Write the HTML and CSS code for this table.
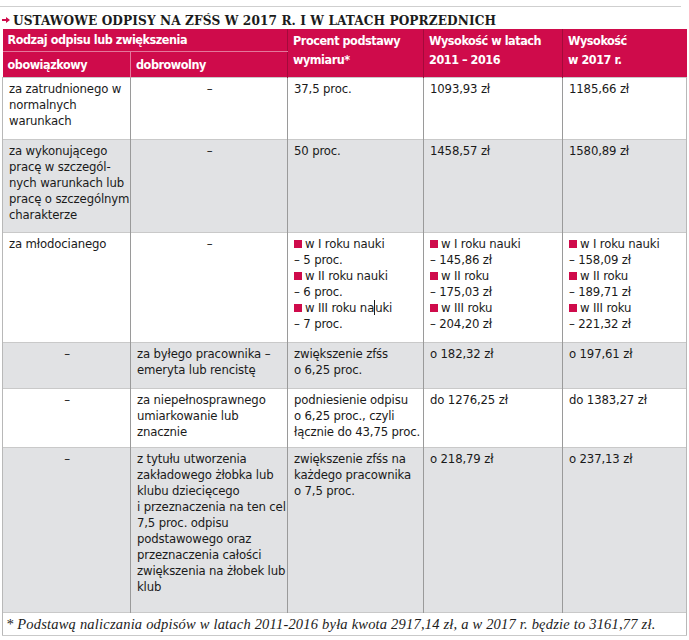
FILE: index.html
```html
<!DOCTYPE html>
<html lang="pl">
<head>
<meta charset="utf-8">
<link rel="stylesheet" href="styles.css">
</head>
<body>
<div class="page">
  <div class="topline"></div>
  <h1 class="title"><svg class="arrow" width="8" height="6" viewBox="0 0 8 6"><path d="M0 2h4V0l4 3-4 3V4H0z" fill="#cf0b4b"/></svg>USTAWOWE ODPISY NA ZFŚS W 2017 R. I W LATACH POPRZEDNICH</h1>
  <table class="tbl">
    <colgroup>
      <col class="c1"><col class="c2"><col class="c3"><col class="c4"><col class="c5">
    </colgroup>
    <thead>
      <tr class="hr1">
        <th colspan="2" class="grp">Rodzaj odpisu lub zwiększenia</th>
        <th rowspan="2" class="hv">Procent podstawy<br>wymiaru*</th>
        <th rowspan="2" class="hv">Wysokość w latach<br>2011 – 2016</th>
        <th rowspan="2" class="hv">Wysokość<br>w 2017 r.</th>
      </tr>
      <tr class="hr2">
        <th class="sub">obowiązkowy</th>
        <th class="sub sub2">dobrowolny</th>
      </tr>
    </thead>
    <tbody>
      <tr class="r1">
        <td>za zatrudnionego w<br>normalnych<br>warunkach</td>
        <td class="dash">–</td>
        <td>37,5 proc.</td>
        <td>1093,93 zł</td>
        <td>1185,66 zł</td>
      </tr>
      <tr class="r2 grey">
        <td>za wykonującego<br>pracę w szczegól-<br>nych warunkach lub<br>pracę o szczególnym<br>charakterze</td>
        <td class="dash">–</td>
        <td>50 proc.</td>
        <td>1458,57 zł</td>
        <td>1580,89 zł</td>
      </tr>
      <tr class="r3">
        <td>za młodocianego</td>
        <td class="dash">–</td>
        <td><span class="sq"></span>w I roku nauki<br>– 5 proc.<br><span class="sq"></span>w II roku nauki<br>– 6 proc.<br><span class="sq"></span>w III roku na<span class="caret"></span>uki<br>– 7 proc.</td>
        <td><span class="sq"></span>w I roku nauki<br>– 145,86 zł<br><span class="sq"></span>w II roku<br>– 175,03 zł<br><span class="sq"></span>w III roku<br>– 204,20 zł</td>
        <td><span class="sq"></span>w I roku nauki<br>– 158,09 zł<br><span class="sq"></span>w II roku<br>– 189,71 zł<br><span class="sq"></span>w III roku<br>– 221,32 zł</td>
      </tr>
      <tr class="r4 grey">
        <td class="dash">–</td>
        <td>za byłego pracownika –<br>emeryta lub rencistę</td>
        <td>zwiększenie zfśs<br>o 6,25 proc.</td>
        <td>o 182,32 zł</td>
        <td>o 197,61 zł</td>
      </tr>
      <tr class="r5">
        <td class="dash">–</td>
        <td>za niepełnosprawnego<br>umiarkowanie lub<br>znacznie</td>
        <td>podniesienie odpisu<br>o 6,25 proc., czyli<br>łącznie do 43,75 proc.</td>
        <td>do 1276,25 zł</td>
        <td>do 1383,27 zł</td>
      </tr>
      <tr class="r6 grey">
        <td class="dash">–</td>
        <td>z tytułu utworzenia<br>zakładowego żłobka lub<br>klubu dziecięcego<br>i przeznaczenia na ten cel<br>7,5 proc. odpisu<br>podstawowego oraz<br>przeznaczenia całości<br>zwiększenia na żłobek lub<br>klub</td>
        <td>zwiększenie zfśs na<br>każdego pracownika<br>o 7,5 proc.</td>
        <td>o 218,79 zł</td>
        <td>o 237,13 zł</td>
      </tr>
    </tbody>
    <tfoot>
      <tr class="rn">
        <td colspan="5" class="note">* Podstawą naliczania odpisów w latach 2011-2016 była kwota 2917,14 zł, a w 2017 r. będzie to 3161,77 zł.</td>
      </tr>
    </tfoot>
  </table>
</div>
</body>
</html>
```

FILE: styles.css
```css
html, body {
  margin: 0;
  padding: 0;
  background: #ffffff;
}

.page {
  width: 689px;
  height: 640px;
  padding-top: 6px;
  box-sizing: border-box;
  overflow: hidden;
}

.topline {
  width: 681px;
  height: 1px;
  background: #cfcfcf;
}

.title {
  margin: 4px 0 0 0;
  padding-left: 2px;
  height: 18px;
  font-family: "DejaVu Serif", "Liberation Serif", serif;
  font-stretch: condensed;
  font-weight: bold;
  font-size: 13.5px;
  letter-spacing: 0.1px;
  line-height: 18px;
  color: #1b1b1b;
  display: flex;
  align-items: center;
  white-space: nowrap;
}

.arrow {
  margin-right: 3px;
  flex: none;
}

.tbl {
  margin-left: 2px;
  border-collapse: collapse;
  table-layout: fixed;
  width: 684px;
  font-family: "DejaVu Sans", "Liberation Sans", sans-serif;
  font-stretch: condensed;
  font-size: 13px;
  letter-spacing: -0.15px;
  color: #1a1a1a;
}

.c1 { width: 128px; }
.c2 { width: 157px; }
.c3 { width: 136px; }
.c4 { width: 139px; }
.c5 { width: 124px; }

.tbl th {
  background: #cf0b4b;
  color: #ffffff;
  font-weight: bold;
  font-size: 12.5px;
  letter-spacing: -0.45px;
  text-align: left;
  vertical-align: top;
  padding: 0 5px;
  white-space: nowrap;
  border-left: 1px solid #a30a3b;
}

.hr1 { height: 22px; }
.hr2 { height: 25px; }

.tbl th.grp {
  border-left: none;
  line-height: 22px;
  border-bottom: 1px solid #e4779b;
}

.tbl th.hv {
  line-height: 19px;
  padding-top: 2px;
}

.tbl th.sub {
  border-left: none;
  line-height: 24px;
  padding-top: 1px;
}

.tbl th.sub2 {
  border-left: 1px solid #e4779b;
}

.tbl td {
  vertical-align: top;
  padding: 3px 5px 0 6px;
  line-height: 16px;
  white-space: nowrap;
  border-left: 1px solid #9a9a9a;
  border-top: 1px solid #c9c9c9;
}

.r1 { height: 62px; }
.r2 { height: 93px; }
.r3 { height: 110px; }
.r4 { height: 46px; }
.r5 { height: 59px; }
.r6 { height: 165px; }
.rn { height: 23px; }

.tbl td:first-child {
  border-left: 1px solid #b8b8b8;
}

.tbl td:last-child {
  border-right: 1px solid #b8b8b8;
}

.tbl tr.grey td {
  background: #e1e2e4;
}

.tbl td.dash {
  text-align: center;
}

.sq {
  display: inline-block;
  width: 8px;
  height: 8px;
  background: #cf0b4b;
  margin-right: 3px;
}

.caret {
  display: inline-block;
  width: 1px;
  height: 15px;
  background: #1c1c1c;
  vertical-align: -3px;
}

.tbl td.note {
  font-family: "Liberation Serif", "DejaVu Serif", serif;
  font-stretch: normal;
  font-style: italic;
  font-size: 14.5px;
  letter-spacing: 0.2px;
  line-height: 18px;
  padding: 2px 4px 2px 3px;
  vertical-align: middle;
  background: #ffffff;
  border-top: 1px solid #c9c9c9;
  border-bottom: 1px solid #c9c9c9;
  border-left: 1px solid #b8b8b8;
  border-right: 1px solid #b8b8b8;
  color: #1c1c1c;
}
```
